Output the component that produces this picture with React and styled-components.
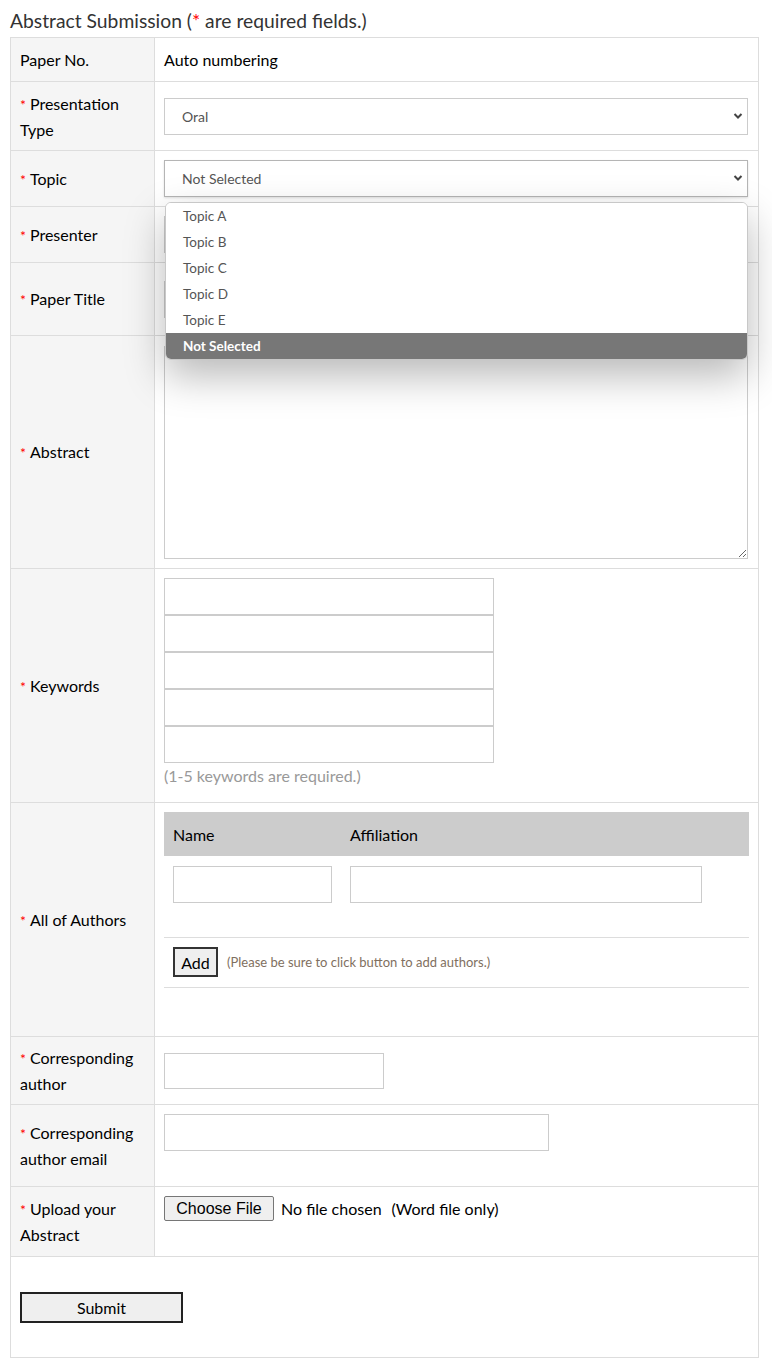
import React from "react";
import styled, { createGlobalStyle } from "styled-components";

const GlobalStyle = createGlobalStyle`
  html, body {
    margin: 0;
    padding: 0;
    background: #fff;
  }
  body {
    font-family: "Lato", "Liberation Sans", sans-serif;
    color: #000;
  }
  * { box-sizing: border-box; }
`;

const Page = styled.div`
  padding: 8px 13px 12px 10px;
  width: 772px;
`;

const Title = styled.h2`
  margin: 0 0 3px;
  font-size: 19.3px;
  line-height: 26px;
  font-weight: 400;
  color: #333;
`;

const Star = styled.span`
  color: #f00;
`;

const FormTable = styled.table`
  width: 749px;
  table-layout: fixed;
  border-collapse: collapse;
  border: 1px solid #ddd;
`;

const LabelCol = styled.col`
  width: 144px;
`;

const Row = styled.tr`
  height: ${(p) => p.h}px;
`;

const Label = styled.th`
  background: #f5f5f5;
  border: 1px solid #ddd;
  padding: 0 6px 0 9px;
  text-align: left;
  font-weight: 400;
  font-size: 16px;
  line-height: 25px;
  color: #000;
  vertical-align: middle;

  ${(p) =>
    p.$req &&
    `
    &::before {
      content: "*";
      color: #f00;
      font-size: 14px;
      margin-right: 4px;
    }
  `}
`;

const Value = styled.td`
  border: 1px solid #ddd;
  padding: ${(p) => (p.$top ? "9px 10px 10px 9px" : "0 10px 0 9px")};
  vertical-align: ${(p) => (p.$top ? "top" : "middle")};
  font-size: 16px;
  color: #000;
`;

const Plain = styled.span`
  font-size: 16px;
`;

const SelectWrap = styled.div`
  position: relative;
  width: 584px;
`;

const Select = styled.div`
  height: 37px;
  border: 1px solid ${(p) => (p.$focused ? "#b5b5b5" : "#ccc")};
  box-shadow: ${(p) => (p.$focused ? "0 1px 2px rgba(0,0,0,0.12)" : "none")};
  background: #fff;
  padding-left: 17px;
  display: flex;
  align-items: center;
  font-size: 14px;
  color: #555;
`;

const Chevron = styled.svg`
  position: absolute;
  right: 5px;
  top: 14px;
  width: 10px;
  height: 8px;
`;

const Menu = styled.ul`
  position: absolute;
  left: 1px;
  right: 0;
  top: 42px;
  margin: 0;
  padding: 0;
  list-style: none;
  background: #fff;
  border: 1px solid #c8c8c8;
  border-radius: 6px;
  overflow: hidden;
  box-shadow: 0 16px 40px rgba(0, 0, 0, 0.28);
  z-index: 10;
`;

const MenuItem = styled.li`
  height: 26px;
  line-height: 26px;
  padding-left: 17px;
  font-size: 13.5px;
  color: ${(p) => (p.$active ? "#fff" : "#555")};
  background: ${(p) => (p.$active ? "#777" : "#fff")};
  font-weight: ${(p) => (p.$active ? 700 : 400)};
`;

const TextInput = styled.input`
  display: block;
  width: ${(p) => p.$w}px;
  height: ${(p) => p.$h || 37}px;
  border: 1px solid #ccc;
  background: #fff;
  margin: 0;
  padding: 0 8px;
  font: inherit;
`;

const TextArea = styled.textarea`
  display: block;
  width: 584px;
  height: 213px;
  border: 1px solid #ccc;
  margin: 0;
  font: inherit;
  resize: both;
`;

const Hint = styled.div`
  margin-top: 3px;
  font-size: 16px;
  color: #999;
`;

const AuthorTable = styled.table`
  width: 585px;
  border-collapse: collapse;
`;

const AuthorHead = styled.th`
  background: #ccc;
  height: 44px;
  padding: 0 9px;
  text-align: left;
  font-weight: 400;
  font-size: 16px;
  color: #000;
  width: ${(p) => (p.$w ? `${p.$w}px` : "auto")};
`;

const AuthorCell = styled.td`
  padding: 10px 9px 0;
  height: 81px;
  vertical-align: top;
`;

const AddCell = styled.td`
  border-top: 1px solid #ddd;
  border-bottom: 1px solid #ddd;
  height: 50px;
  padding: 0 9px;
  vertical-align: middle;
`;

const AddLine = styled.div`
  display: flex;
  align-items: center;
  gap: 9px;
`;

const AddButton = styled.button`
  width: 45px;
  height: 30px;
  background: #efefef;
  border: 2px solid #333;
  font-family: "Lato", "Liberation Sans", sans-serif;
  font-size: 16px;
  color: #000;
  padding: 0;
`;

const Note = styled.span`
  font-size: 13px;
  color: #7f6f60;
`;

const FileLine = styled.div`
  display: flex;
  align-items: center;
  font-size: 16px;
`;

const FileButton = styled.button`
  height: 25px;
  width: 110px;
  padding: 0;
  background: #efefef;
  border: 1px solid #767676;
  border-radius: 2px;
  font-family: "Liberation Sans", Arial, sans-serif;
  font-size: 16px;
  color: #000;
  margin-right: 7px;
`;

const FileNote = styled.span`
  margin-left: 10px;
`;

const SubmitCell = styled.td`
  border: 1px solid #ddd;
  padding: 0 9px;
  vertical-align: middle;
`;

const SubmitButton = styled.button`
  width: 163px;
  height: 31px;
  background: #efefef;
  border: 2px solid #222;
  font-family: "Lato", "Liberation Sans", sans-serif;
  font-size: 16px;
  color: #000;
`;

const topics = ["Topic A", "Topic B", "Topic C", "Topic D", "Topic E", "Not Selected"];

const DropChevron = () => (
  <Chevron viewBox="0 0 10 8">
    <path d="M1.5 2 L5 5.5 L8.5 2" fill="none" stroke="#444" strokeWidth="2" />
  </Chevron>
);

export default function App() {
  return (
    <Page>
      <GlobalStyle />
      <Title>
        Abstract Submission (<Star>*</Star> are required fields.)
      </Title>
      <FormTable>
        <colgroup>
          <LabelCol />
          <col />
        </colgroup>
        <tbody>
          <Row h={44}>
            <Label>Paper No.</Label>
            <Value>
              <Plain>Auto numbering</Plain>
            </Value>
          </Row>
          <Row h={69}>
            <Label $req>Presentation Type</Label>
            <Value>
              <SelectWrap>
                <Select>Oral</Select>
                <DropChevron />
              </SelectWrap>
            </Value>
          </Row>
          <Row h={56}>
            <Label $req>Topic</Label>
            <Value>
              <SelectWrap>
                <Select $focused>Not Selected</Select>
                <DropChevron />
                <Menu>
                  {topics.map((t, i) => (
                    <MenuItem key={i} $active={i === topics.length - 1}>
                      {t}
                    </MenuItem>
                  ))}
                </Menu>
              </SelectWrap>
            </Value>
          </Row>
          <Row h={56}>
            <Label $req>Presenter</Label>
            <Value>
              <TextInput $w={584} />
            </Value>
          </Row>
          <Row h={73}>
            <Label $req>Paper Title</Label>
            <Value>
              <TextInput $w={584} />
            </Value>
          </Row>
          <Row h={233}>
            <Label $req>Abstract</Label>
            <Value>
              <TextArea />
            </Value>
          </Row>
          <Row h={234}>
            <Label $req>Keywords</Label>
            <Value $top>
              {[0, 1, 2, 3, 4].map((k) => (
                <TextInput key={k} $w={330} />
              ))}
              <Hint>(1-5 keywords are required.)</Hint>
            </Value>
          </Row>
          <Row h={234}>
            <Label $req>All of Authors</Label>
            <Value $top>
              <AuthorTable>
                <thead>
                  <tr>
                    <AuthorHead $w={177}>Name</AuthorHead>
                    <AuthorHead>Affiliation</AuthorHead>
                  </tr>
                </thead>
                <tbody>
                  <tr>
                    <AuthorCell>
                      <TextInput $w={159} />
                    </AuthorCell>
                    <AuthorCell>
                      <TextInput $w={352} />
                    </AuthorCell>
                  </tr>
                  <tr>
                    <AddCell colSpan={2}>
                      <AddLine>
                        <AddButton>Add</AddButton>
                        <Note>(Please be sure to click button to add authors.)</Note>
                      </AddLine>
                    </AddCell>
                  </tr>
                </tbody>
              </AuthorTable>
            </Value>
          </Row>
          <Row h={68}>
            <Label $req>Corresponding author</Label>
            <Value>
              <TextInput $w={220} $h={36} />
            </Value>
          </Row>
          <Row h={82}>
            <Label $req>Corresponding author email</Label>
            <Value $top>
              <TextInput $w={385} />
            </Value>
          </Row>
          <Row h={70}>
            <Label $req>Upload your Abstract</Label>
            <Value $top>
              <FileLine>
                <FileButton>Choose File</FileButton>
                No file chosen
                <FileNote>(Word file only)</FileNote>
              </FileLine>
            </Value>
          </Row>
          <Row h={101}>
            <SubmitCell colSpan={2}>
              <SubmitButton>Submit</SubmitButton>
            </SubmitCell>
          </Row>
        </tbody>
      </FormTable>
    </Page>
  );
}
